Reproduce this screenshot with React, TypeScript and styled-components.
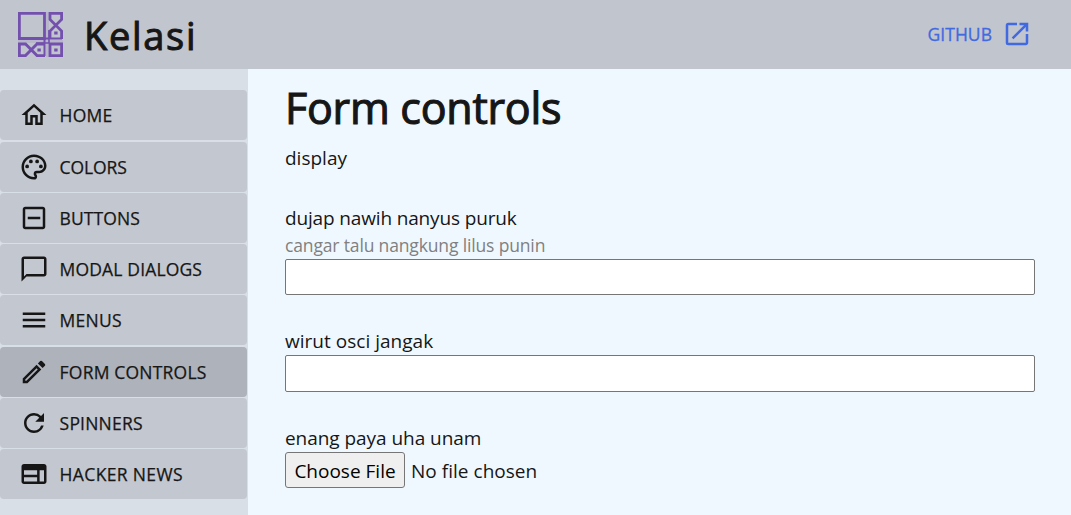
import React from "react";
import styled, { createGlobalStyle } from "styled-components";
import type { IconType } from "react-icons";
import {
  MdOutlineHome,
  MdOutlinePalette,
  MdOutlineIndeterminateCheckBox,
  MdChatBubbleOutline,
  MdMenu,
  MdOutlineModeEdit,
  MdRefresh,
  MdOutlineWeb,
  MdOpenInNew,
} from "react-icons/md";

const GlobalStyle = createGlobalStyle`
  *, *::before, *::after { box-sizing: border-box; }
  body {
    margin: 0;
    background: #f0f8ff;
    color: #161616;
    font-family: "Open Sans", "Noto Sans", sans-serif;
    font-size: 19px;
    overflow: hidden;
  }
`;

const Page = styled.div`
  display: flex;
  flex-direction: column;
  height: 515px;
`;

const Header = styled.header`
  display: flex;
  align-items: center;
  flex: 0 0 69px;
  padding: 0 39px 0 18px;
  background: #c1c5cd;
`;

const Brand = styled.div`
  flex: 1;
  padding: 0 0 0 20px;
  font-size: 38px;
  line-height: 60px;
  letter-spacing: 1.7px;
  -webkit-text-stroke: 1px currentColor;
`;

const HeaderLink = styled.a`
  display: flex;
  align-items: center;
  gap: 10px;
  padding-bottom: 2px;
  color: #4169e1;
  font-size: 17.5px;
  letter-spacing: 0.05px;
  -webkit-text-stroke: 0.3px currentColor;
`;

const Body = styled.div`
  display: flex;
  flex: 1;
  min-height: 0;
`;

const Sidebar = styled.nav`
  display: flex;
  flex-direction: column;
  flex: 0 0 248px;
  gap: 1.25px;
  padding: 21.4px 1px 0 0;
  background: #d9dfe6;
`;

const NavItem = styled.a<{ $active?: boolean }>`
  display: flex;
  align-items: center;
  flex: 0 0 50px;
  gap: 10.3px;
  padding-left: 19.3px;
  border-radius: 4px;
  background: ${(p) => (p.$active ? "#aeb2ba" : "#c3c7cf")};
  font-size: 17.5px;
`;

const NavText = styled.span<{ $spacing: number }>`
  letter-spacing: ${(p) => p.$spacing}px;
  -webkit-text-stroke: 0.25px currentColor;
`;

const Main = styled.main`
  flex: 1;
  padding: 9px 36px 0 37px;
`;

const Title = styled.h1`
  margin: 0;
  font-size: 43px;
  font-weight: 400;
  line-height: 60px;
  letter-spacing: -0.25px;
  -webkit-text-stroke: 1.1px currentColor;
`;

const Intro = styled.p`
  margin: 6px 0 32px;
  line-height: 28px;
`;

const Field = styled.div<{ $gap: number }>`
  display: flex;
  flex-direction: column;
  align-items: flex-start;
  margin-bottom: ${(p) => p.$gap}px;
`;

const Label = styled.label<{ $spacing: number }>`
  line-height: 28px;
  letter-spacing: ${(p) => p.$spacing}px;
`;

const Hint = styled.small`
  color: #808080;
  font-size: 17.5px;
  line-height: 27px;
  letter-spacing: -0.15px;
`;

const TextInput = styled.input<{ $height: number }>`
  width: 100%;
  height: ${(p) => p.$height}px;
  border: 1px solid #767676;
  border-radius: 2px;
  background: #fff;
`;

const FileRow = styled.div`
  display: flex;
  align-items: center;
  gap: 6px;
  height: 36px;
`;

const FileStatus = styled.span`
  padding-top: 2px;
  line-height: 36px;
  letter-spacing: 0.03px;
`;

const FileButton = styled.button`
  width: 120px;
  height: 36px;
  padding: 1px 0 0;
  border: 1px solid #767676;
  border-radius: 3px;
  background: #efefef;
  color: #000;
  font: inherit;
  line-height: 34px;
  white-space: nowrap;
`;

const Logo = () => (
  <svg width="46" height="46" viewBox="0 0 46 46" fill="none" stroke="#7350ae" strokeWidth="2.8">
    <path d="M28 0H31V45H28ZM0 28H45V31H0Z" fill="#7350ae" fillOpacity="0.12" stroke="none" />
    <path d="M1.4 1.4H26.5V26.5H1.4Z" />
    <path d="M26.5 26V44M26 26.5H44" strokeWidth="2" />
    <path d="M31 31V18M31 31H18" strokeWidth="1.6" />
    <path d="M32 32H43.6V43.6H32Z" />
    <path d="M27 32H19L7.5 43.6H1.4V32H7.5L19 43.6H27" />
    <path d="M32 27V19L43.6 7.5V1.4H32V7.5L43.6 19V27" />
    <path d="M36.2 38H39.6M19.4 38H22.8M36.2 21H39.6" strokeWidth="3.2" />
  </svg>
);

type Entry = { label: string; icon: IconType; spacing: number; active?: boolean };

const entries: Entry[] = [
  { label: "HOME", icon: MdOutlineHome, spacing: 0.25 },
  { label: "COLORS", icon: MdOutlinePalette, spacing: -0.1 },
  { label: "BUTTONS", icon: MdOutlineIndeterminateCheckBox, spacing: 0.1 },
  { label: "MODAL DIALOGS", icon: MdChatBubbleOutline, spacing: 0.15 },
  { label: "MENUS", icon: MdMenu, spacing: 0.25 },
  { label: "FORM CONTROLS", icon: MdOutlineModeEdit, spacing: 0.2, active: true },
  { label: "SPINNERS", icon: MdRefresh, spacing: 0.2 },
  { label: "HACKER NEWS", icon: MdOutlineWeb, spacing: 0.35 },
];

export default function App() {
  return (
    <Page>
      <GlobalStyle />
      <Header>
        <Logo />
        <Brand>Kelasi</Brand>
        <HeaderLink>
          GITHUB
          <MdOpenInNew size={30} />
        </HeaderLink>
      </Header>
      <Body>
        <Sidebar>
          {entries.map(({ label, icon: Icon, spacing, active }) => (
            <NavItem key={label} $active={active}>
              <Icon size={30} />
              <NavText $spacing={spacing}>{label}</NavText>
            </NavItem>
          ))}
        </Sidebar>
        <Main>
          <Title>Form controls</Title>
          <Intro>display</Intro>
          <Field $gap={32}>
            <Label $spacing={-0.15}>dujap nawih nanyus puruk</Label>
            <Hint>cangar talu nangkung lilus punin</Hint>
            <TextInput $height={36} />
          </Field>
          <Field $gap={32}>
            <Label $spacing={0.02}>wirut osci jangak</Label>
            <TextInput $height={37} />
          </Field>
          <Field $gap={0}>
            <Label $spacing={-0.05}>enang paya uha unam</Label>
            <FileRow>
              <FileButton>Choose File</FileButton>
              <FileStatus>No file chosen</FileStatus>
            </FileRow>
          </Field>
        </Main>
      </Body>
    </Page>
  );
}
